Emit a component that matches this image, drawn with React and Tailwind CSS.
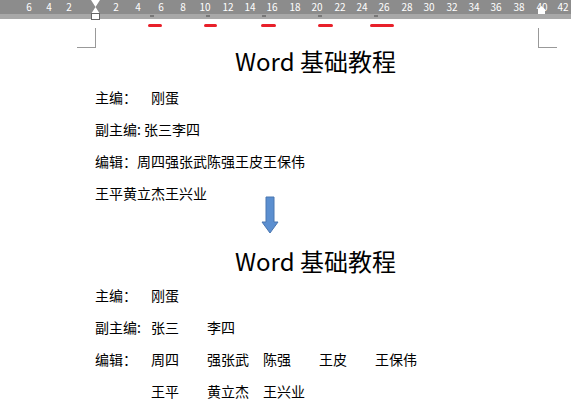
export default function App() {
  const nums = [[29,"6"],[49,"4"],[69,"2"],[116,"2"],[138,"4"],[161,"6"],[183,"8"],[205,"10"],[228,"12"],[250,"14"],[272,"16"],[295,"18"],[317,"20"],[340,"22"],[362,"24"],[384,"26"],[407,"28"],[429,"30"],[452,"32"],[474,"34"],[496,"36"],[519,"38"],[542,"40"],[563,"42"]];
  const reds = [[148,14],[204,13],[261,15],[318,15],[370,24]];
  const f = { fontFamily: '"Noto Sans CJK SC", "Liberation Sans", sans-serif' };
  const T = ({ children }) => <span className="inline-block w-[56px] shrink-0">{children}</span>;
  return (
    <div className="w-[571px] h-[414px] bg-white relative overflow-hidden text-[14px] text-black" style={f}>
      <div className="h-[14px] bg-[#8c8c8c] relative">
        {nums.map(([x, n], i) => (
          <span key={i} className="absolute top-0 text-[10px] leading-[14px] text-white -translate-x-1/2" style={{ left: x }}>{n}</span>
        ))}
        <div className="absolute left-[91px] top-0 w-[9px] h-[14px] bg-white [clip-path:polygon(0_0,100%_0,50%_50%,100%_100%,0_100%,50%_50%)]" />
        <div className="absolute left-[538px] top-[6px] w-[7px] h-[8px] bg-white [clip-path:polygon(50%_0,100%_40%,100%_100%,0_100%,0_40%)]" />
      </div>
      <div className="h-[5px] bg-[#a8a8a8] relative">
        <div className="absolute left-[91px] -top-[1px] w-[9px] h-[7px] border border-[#666] bg-white" />
        {[150,206,262,318,374].map(x => <div key={x} className="absolute top-[1px] w-[4px] h-[2px] bg-[#777]" style={{left:x}} />)}
      </div>
      {reds.map(([x, w], i) => (
        <div key={i} className="absolute top-[24px] h-[3px] rounded-full bg-[#e8202a]" style={{ left: x, width: w }} />
      ))}
      <div className="absolute left-[77px] top-[28px] w-[19px] h-[20px] border-r border-b border-[#999]" />
      <div className="absolute left-[538px] top-[28px] w-[19px] h-[20px] border-l border-b border-[#999]" />

      <div className="absolute left-[95px] top-[45px] w-[420px] flex flex-col">
        <div className="pl-[140px] text-[24px] leading-[32px]">Word 基础教程</div>
        <div className="h-[32px] leading-[32px] mt-[4px] flex"><T>主编：</T>刚蛋</div>
        <div className="h-[32px] leading-[32px]">副主编: 张三李四</div>
        <div className="h-[32px] leading-[32px]">编辑：周四强张武陈强王皮王保伟</div>
        <div className="h-[32px] leading-[32px]">王平黄立杰王兴业</div>
        <div className="h-[36px]" />
        <div className="pl-[140px] text-[24px] leading-[32px]">Word 基础教程</div>
        <div className="h-[32px] leading-[32px] mt-[2px] flex"><T>主编：</T>刚蛋</div>
        <div className="h-[32px] leading-[32px] flex"><T>副主编:</T><T>张三</T>李四</div>
        <div className="h-[32px] leading-[32px] flex"><T>编辑：</T><T>周四</T><T>强张武</T><T>陈强</T><T>王皮</T>王保伟</div>
        <div className="h-[32px] leading-[32px] flex"><T></T><T>王平</T><T>黄立杰</T>王兴业</div>
      </div>

      <svg className="absolute left-[261px] top-[196px]" width="18" height="38" viewBox="0 0 18 38">
        <path d="M5 1 H13 V26 H17 L9 37 L1 26 H5 Z" fill="#5b8fd0" stroke="#4a76b0" strokeWidth="1" />
      </svg>
    </div>
  );
}
